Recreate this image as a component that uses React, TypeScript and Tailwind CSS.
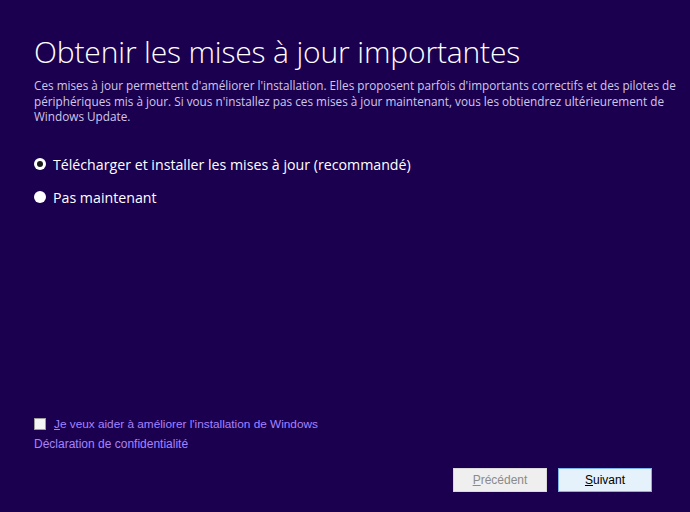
import React, { useState } from 'react';

export default function App() {
  const [choice, setChoice] = useState<'install' | 'later'>('install');
  const [help, setHelp] = useState(false);

  return (
    <div className="w-[690px] h-[512px] bg-[#1b0050] flex flex-col font-['Open_Sans',sans-serif] text-white overflow-hidden">
      <div className="px-[34px] pt-[32px] flex-1 flex flex-col">
        <h1 className="text-[30px] leading-[40px] font-light tracking-[-0.15px]">
          Obtenir les mises à jour importantes
        </h1>
        <p className="mt-[6px] text-[11.75px] leading-[15.5px] text-[#cfc7e6] whitespace-nowrap">
          Ces mises à jour permettent d'améliorer l'installation. Elles proposent parfois d'importants correctifs et des pilotes de
          <br />
          périphériques mis à jour. Si vous n'installez pas ces mises à jour maintenant, vous les obtiendrez ultérieurement de
          <br />
          Windows Update.
        </p>

        <div className="mt-[30px] flex flex-col gap-[14px] text-[14.2px] leading-[19px]">
          <label className="flex items-center gap-[7px] cursor-pointer" onClick={() => setChoice('install')}>
            <span className="w-[12px] h-[12px] rounded-full bg-white flex items-center justify-center">
              {choice === 'install' && <span className="w-[6px] h-[6px] rounded-full bg-[#1a1a1a]" />}
            </span>
            <span>Télécharger et installer les mises à jour (recommandé)</span>
          </label>
          <label className="flex items-center gap-[7px] cursor-pointer" onClick={() => setChoice('later')}>
            <span className="w-[12px] h-[12px] rounded-full bg-white flex items-center justify-center">
              {choice === 'later' && <span className="w-[6px] h-[6px] rounded-full bg-[#1a1a1a]" />}
            </span>
            <span>Pas maintenant</span>
          </label>
        </div>

        <div className="mt-auto mb-[7px] flex flex-col gap-[6px] text-[11.8px] leading-[14px] text-[#a384ff] font-['Liberation_Sans',sans-serif]">
          <label className="flex items-center gap-[8px] cursor-pointer" onClick={() => setHelp(!help)}>
            <span className="w-[12px] h-[12px] bg-[#f4f4f4] border border-[#9c9c9c] flex items-center justify-center text-[10px] text-black leading-none">
              {help ? '✓' : ''}
            </span>
            <span><span className="underline">J</span>e veux aider à améliorer l'installation de Windows</span>
          </label>
          <span className="text-[12px]">Déclaration de confidentialité</span>
        </div>
      </div>

      <div className="flex justify-end gap-[11px] pr-[38px] pb-[20px] pt-[10px] text-[12px] font-['Liberation_Sans',sans-serif]">
        <button className="w-[94px] h-[24px] bg-[#efefef] border border-[#d9d9d9] text-[#8a8a8a]">
          <span className="underline">P</span>récédent
        </button>
        <button className="w-[94px] h-[24px] bg-[#e5f1fb] border border-[#7eb4ea] text-black">
          <span className="underline">S</span>uivant
        </button>
      </div>
    </div>
  );
}
